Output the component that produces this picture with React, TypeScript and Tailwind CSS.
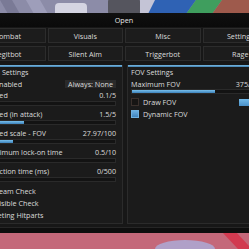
import React from 'react';

const font = { fontFamily: '"Open Sans", "Noto Sans", sans-serif' };

const tabs = [
  ['Combat', 'Visuals', 'Misc', 'Settings'],
  ['Legitbot', 'Silent Aim', 'Triggerbot', 'Rage'],
];

const sliders = [
  { label: 'Speed', value: '0.1/5', fill: 6 },
  { label: 'Speed (in attack)', value: '1.5/5', fill: 40 },
  { label: 'Speed scale - FOV', value: '27.97/100', fill: 29 },
  { label: 'Minimum lock-on time', value: '0.5/10', fill: 7 },
  { label: 'Reaction time (ms)', value: '0/500', fill: 0 },
];

const checks = ['Team Check', 'Visible Check'];

const Checkbox = ({ on }: { on?: boolean }) => (
  <div
    className={
      on
        ? 'w-[8px] h-[8px] shrink-0 border border-[#6fb0de] bg-gradient-to-b from-[#6aaee0] to-[#3f83bd]'
        : 'w-[8px] h-[8px] shrink-0 border border-[#3a302c] bg-[#161514]'
    }
  />
);

const Track = ({ fill }: { fill: number }) => (
  <div className="h-[5px] mt-[1px] bg-[#131313] border border-[#2a2a2a] relative">
    <div
      className="h-full bg-gradient-to-b from-[#79c0ec] to-[#3c82bb]"
      style={{ width: fill }}
    />
  </div>
);

const Wallpaper = () => (
  <svg className="absolute inset-0" width="249" height="249" viewBox="0 0 249 249">
    <rect x="0" y="0" width="249" height="14" fill="#8c8ca8" />
    <path d="M0 0 L12 0 L20 14 L8 14 Z" fill="#7a7a96" />
    <path d="M26 0 L40 0 L48 14 L34 14 Z" fill="#9e9eba" />
    <rect x="55" y="3" width="32" height="16" rx="4" fill="#d4d4e2" />
    <rect x="108" y="-4" width="32" height="22" rx="6" fill="#55555e" />
    <path d="M140 0 L160 0 L152 14 L140 14 Z" fill="#c4c4d6" />
    <path d="M155 0 L196 0 L186 14 L148 14 Z" fill="#2f62b4" />
    <path d="M196 0 L222 0 L212 14 L186 14 Z" fill="#3f9e5e" />
    <path d="M222 0 L249 0 L249 14 L212 14 Z" fill="#9e5a4c" />
    <rect x="0" y="232" width="249" height="17" fill="#c4687a" />
    <ellipse cx="185" cy="249" rx="30" ry="9" fill="#b0a0c8" />
    <path d="M222 232 L236 232 L249 246 L249 249 L238 249 Z" fill="#d23a50" />
  </svg>
);

export default function App() {
  return (
    <div className="relative w-[249px] h-[249px] overflow-hidden bg-[#8c8ca8]" style={font}>
      <Wallpaper />
      <div className="relative mt-[13px] ml-[-34px] w-[316px] bg-[#171717] text-[#dcdcdc] text-[7.2px] leading-[10px]">
        <div className="h-[14px] bg-gradient-to-b from-[#101010] to-[#0a0a0a] flex items-center justify-center text-[#e6e6e6]">
          Open
        </div>
        <div className="px-[4px] pt-[1px] flex flex-col gap-[3px]">
          {tabs.map((row, i) => (
            <div key={i} className="grid grid-cols-4 gap-[2px]">
              {row.map((t) => (
                <div
                  key={t}
                  className="h-[15px] flex items-center justify-center bg-[#1c1c1c] border border-[#2c2c2c]"
                >
                  {t}
                </div>
              ))}
            </div>
          ))}
        </div>
        <div className="px-[4px] mt-[4px] flex gap-[4px]">
          <div className="w-[153px] h-[159px] bg-[#1b1b1b] border border-t-0 border-[#2b2b2b]">
            <div className="h-[2px] bg-gradient-to-b from-[#7bbbe4] to-[#3f7fae]" />
            <div className="pl-[12px] pr-[6px]">
              <div className="h-[10px] flex items-center pl-[4px]">Aim Settings</div>
              <div className="h-[10px] mt-[2px] flex items-center gap-[4px]">
                <Checkbox on />
                <span>Enabled</span>
                <span className="ml-auto h-[8px] px-[3px] flex items-center bg-[#2a2a2a]">Always: None</span>
              </div>
              <div className="mt-[1px] flex flex-col gap-[3px]">
                {sliders.map((s) => (
                  <div key={s.label}>
                    <div className="h-[10px] flex items-center justify-between pl-[4px]">
                      <span>{s.label}</span>
                      <span>{s.value}</span>
                    </div>
                    <Track fill={s.fill} />
                  </div>
                ))}
              </div>
              <div className="mt-[3px] flex flex-col gap-[1px]">
                {checks.map((c) => (
                  <div key={c} className="h-[11px] flex items-center gap-[4px]">
                    <Checkbox />
                    <span>{c}</span>
                  </div>
                ))}
                <div className="h-[11px] flex items-center">Targeting Hitparts</div>
              </div>
            </div>
          </div>
          <div className="w-[151px] h-[159px] bg-[#1b1b1b] border border-t-0 border-[#2b2b2b]">
            <div className="h-[2px] bg-gradient-to-b from-[#7bbbe4] to-[#3f7fae]" />
            <div className="pl-[3px] pr-[14px]">
              <div className="h-[10px] flex items-center">FOV Settings</div>
              <div className="h-[9px] mt-[2px] flex items-center justify-between">
                <span>Maximum FOV</span>
                <span>375/500</span>
              </div>
              <Track fill={83} />
              <div className="mt-[4px] flex flex-col gap-[4px]">
                <div className="h-[8px] flex items-center gap-[4px]">
                  <Checkbox />
                  <span>Draw FOV</span>
                  <div className="ml-auto w-[24px] h-[7px] bg-gradient-to-b from-[#72bae8] to-[#4a90c8]" />
                </div>
                <div className="h-[8px] flex items-center gap-[4px]">
                  <Checkbox on />
                  <span>Dynamic FOV</span>
                </div>
              </div>
            </div>
          </div>
        </div>
        <div className="h-[3px]" />
        <div className="h-[6px] bg-[#0e0e0e] border-t border-[#262626]" />
      </div>
    </div>
  );
}
